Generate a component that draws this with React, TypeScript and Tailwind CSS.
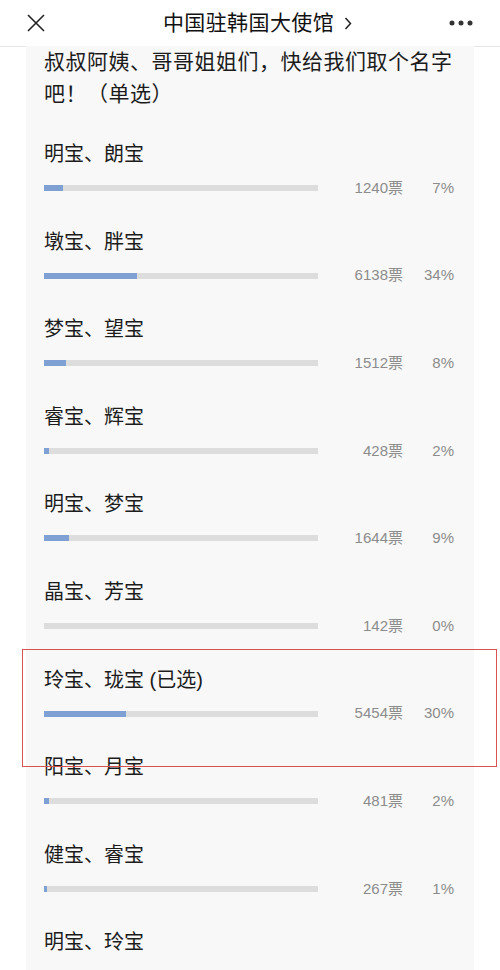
const options = [
  { name: "明宝、朗宝", votes: 1240, pct: 7 },
  { name: "墩宝、胖宝", votes: 6138, pct: 34 },
  { name: "梦宝、望宝", votes: 1512, pct: 8 },
  { name: "睿宝、辉宝", votes: 428, pct: 2 },
  { name: "明宝、梦宝", votes: 1644, pct: 9 },
  { name: "晶宝、芳宝", votes: 142, pct: 0 },
  { name: "玲宝、珑宝 (已选)", votes: 5454, pct: 30 },
  { name: "阳宝、月宝", votes: 481, pct: 2 },
  { name: "健宝、睿宝", votes: 267, pct: 1 },
  { name: "明宝、玲宝" },
];

function OptionRow({ name, votes, pct }: { name: string; votes?: number; pct?: number }) {
  // the last option is cut by the screen, only its name shows
  if (votes === undefined || pct === undefined) {
    return (
      <div className="pb-[60px]">
        <div className="h-[28px] leading-[28px] text-[20px] text-[#1c1c1c]">{name}</div>
      </div>
    );
  }
  const fill = pct === 0 ? 0 : Math.max(pct, 0.8);
  return (
    <div className="pb-[29.6px]">
      <div className="h-[28px] leading-[28px] text-[20px] text-[#1c1c1c]">{name}</div>
      <div className="mt-[10px] h-[20px] flex items-center">
        <div className="w-[274px] h-[6px] bg-[#dddddd] shrink-0">
          <div className="h-full bg-[#7ea0d3]" style={{ width: `${fill}%` }} />
        </div>
        <div className="flex-1 text-right text-[15px] text-[#8c8c8c]">{votes}票</div>
        <div className="w-[51px] text-right text-[15px] text-[#8c8c8c]">{pct}%</div>
      </div>
    </div>
  );
}

export default function App() {
  return (
    <div
      className="relative w-[500px] h-[970px] overflow-hidden bg-white"
      style={{ fontFamily: '"Liberation Sans", "Noto Sans CJK SC", sans-serif' }}
    >
      <header className="h-[47px] border-b border-[#e6e6e6] flex items-center justify-between px-[27px]">
        <svg width="18" height="18" viewBox="0 0 18 18" className="mt-[-1px]">
          <path d="M1 1 L17 17 M17 1 L1 17" stroke="#222" strokeWidth="1.6" fill="none" />
        </svg>
        <div className="flex items-center pl-[17px] ml-[4px]">
          <span className="text-[21px] text-[#111] tracking-[0.4px]">中国驻韩国大使馆</span>
          <svg width="8" height="13" viewBox="0 0 8 13" className="ml-[10px]">
            <path d="M1.5 1 L6.5 6.5 L1.5 12" stroke="#222" strokeWidth="1.5" fill="none" />
          </svg>
        </div>
        <svg width="24" height="6" viewBox="0 0 24 6">
          <circle cx="3" cy="3" r="2.5" fill="#333" />
          <circle cx="12" cy="3" r="2.5" fill="#333" />
          <circle cx="21" cy="3" r="2.5" fill="#333" />
        </svg>
      </header>

      <main className="px-[26px]">
        <div className="bg-[#f8f8f8] pl-[18px] pr-[20px]">
          <h1 className="text-[21px] leading-[32px] tracking-[0.5px] text-[#1c1c1c] mt-[-1px]">
            叔叔阿姨、哥哥姐姐们，快给我们取个名字
            <br />
            吧！（单选）
          </h1>
          <div className="mt-[30px]">
            {options.map((o) => (
              <OptionRow key={o.name} name={o.name} votes={o.votes} pct={o.pct} />
            ))}
          </div>
        </div>
      </main>

      <div className="absolute left-[22px] top-[649px] w-[475px] h-[118px] border-[1.5px] border-[#d9534f] pointer-events-none" />
    </div>
  );
}
